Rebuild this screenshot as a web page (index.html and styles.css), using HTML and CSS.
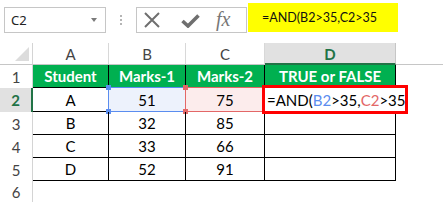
FILE: index.html
```html
<!DOCTYPE html>
<html>
<head>
<meta charset="utf-8">
<link rel="stylesheet" href="styles.css">
</head>
<body>
<div class="app">
  <div class="toolbar">
    <div class="namebox"><span>C2</span><span class="caret"></span></div>
    <div class="dots"><i></i><i></i><i></i></div>
    <div class="fxbox">
      <svg class="ic-x" width="18" height="16" viewBox="0 0 18 16"><path d="M2 1 L16 15 M16 1 L2 15" stroke="#6f6f6f" stroke-width="2" fill="none"/></svg>
      <svg class="ic-check" width="19" height="14" viewBox="0 0 19 14"><path d="M1.5 7 L7 12 L17.5 1.5" stroke="#6f6f6f" stroke-width="3.6" fill="none"/></svg>
      <span class="fx">fx</span>
    </div>
    <div class="formula">=AND(B2&gt;35,C2&gt;35</div>
  </div>
  <div class="sheet">
    <div class="corner"></div>
    <div class="colhdr">A</div>
    <div class="colhdr">B</div>
    <div class="colhdr">C</div>
    <div class="colhdr active">D</div>
    <div class="colhdr last"></div>

    <div class="rowhdr">1</div>
    <div class="cell head">Student</div>
    <div class="cell head">Marks-1</div>
    <div class="cell head">Marks-2</div>
    <div class="cell head">TRUE or FALSE</div>
    <div class="empty"></div>

    <div class="rowhdr active">2</div>
    <div class="cell">A</div>
    <div class="cell ref ref-b">51<span class="refbox blue"><b class="h tl"></b><b class="h tr"></b><b class="h bl"></b><b class="h br"></b></span></div>
    <div class="cell ref ref-c">75<span class="refbox red"><b class="h tl"></b><b class="h bl"></b></span></div>
    <div class="cell edit"><span class="editor">=AND(<span class="rb">B2</span>&gt;35,<span class="rc">C2</span>&gt;35</span></div>
    <div class="empty"></div>

    <div class="rowhdr">3</div>
    <div class="cell">B</div>
    <div class="cell">32</div>
    <div class="cell">85</div>
    <div class="cell"></div>
    <div class="empty"></div>

    <div class="rowhdr">4</div>
    <div class="cell">C</div>
    <div class="cell">33</div>
    <div class="cell">66</div>
    <div class="cell"></div>
    <div class="empty"></div>

    <div class="rowhdr">5</div>
    <div class="cell">D</div>
    <div class="cell">52</div>
    <div class="cell">91</div>
    <div class="cell"></div>
    <div class="empty"></div>

    <div class="rowhdr">6</div>
    <div class="empty"></div>
    <div class="empty"></div>
    <div class="empty"></div>
    <div class="empty"></div>
    <div class="empty"></div>
  </div>
</div>
</body>
</html>
```
FILE: styles.css
```css
* { box-sizing: border-box; }
html, body { margin: 0; padding: 0; background: #fff; }
body { width: 443px; height: 202px; overflow: hidden; font-family: Lato, "Liberation Sans", sans-serif; }

.toolbar {
  display: flex;
  align-items: flex-start;
  height: 43px;
}
.namebox {
  margin: 7px 0 0 4px;
  width: 102px;
  height: 26px;
  border: 1px solid #c6c6c6;
  display: flex;
  align-items: center;
  justify-content: space-between;
  padding: 0 7px 0 6px;
  font-family: "Noto Sans", sans-serif;
  font-size: 13px;
  color: #222;
}
.caret {
  width: 0; height: 0;
  border-left: 3.5px solid transparent;
  border-right: 3.5px solid transparent;
  border-top: 4px solid #7a7a7a;
  margin-right: 1px;
}
.dots {
  width: 30px;
  height: 26px;
  margin-top: 7px;
  display: flex;
  flex-direction: column;
  align-items: center;
  justify-content: center;
  gap: 2px;
}
.dots i { display: block; width: 2px; height: 2px; background: #b5b5b5; }
.fxbox {
  margin-top: 7px;
  width: 111px;
  height: 26px;
  border: 1px solid #c6c6c6;
  display: flex;
  align-items: center;
  padding-left: 6px;
}
.ic-x { margin-right: 20px; }
.ic-check { margin-right: 16px; margin-top: 2px; }
.fx {
  font-family: "Liberation Serif", serif;
  font-style: italic;
  font-size: 20px;
  color: #777;
  line-height: 1;
  margin-top: -2px;
}
.formula {
  margin: 3px 0 0 1px;
  width: 150px;
  height: 29px;
  background: #ffff00;
  padding: 7px 0 0 14px;
  font-size: 12.5px;
  color: #111;
  line-height: 16px;
}

.sheet {
  display: grid;
  grid-template-columns: 33px 76px 77px 79px 131px 1fr;
  grid-template-rows: 22px 23px 24px 23px 23px 23px 21px;
}
.corner {
  border-right: 1px solid #d4d4d4;
  border-bottom: 1px solid #c6c6c6;
  position: relative;
}
.corner::after {
  content: "";
  position: absolute;
  right: 3px; bottom: 3px;
  width: 0; height: 0;
  border-left: 14px solid transparent;
  border-bottom: 14px solid #dcdcdc;
}
.colhdr {
  border-right: 1px solid #d8d8d8;
  border-bottom: 1px solid #c6c6c6;
  display: flex;
  align-items: center;
  justify-content: center;
  font-size: 15px;
  color: #444;
  padding-top: 1px;
}
.colhdr.active {
  background: #e1e1e1;
  color: #217346;
  font-weight: bold;
  border-bottom: 2px solid #217346;
  border-right-color: #c6c6c6;
}
.colhdr.last { border-right: none; }
.rowhdr {
  border-right: 1px solid #d4d4d4;
  display: flex;
  align-items: center;
  justify-content: center;
  font-size: 15px;
  color: #444;
}
.rowhdr.active {
  background: #e1e1e1;
  color: #217346;
  font-weight: bold;
  border-right: 2px solid #217346;
}
.cell {
  border-right: 1px solid #000;
  border-bottom: 1px solid #000;
  display: flex;
  align-items: center;
  justify-content: center;
  font-size: 15px;
  color: #000;
  position: relative;
}
.cell.head {
  background: #00b050;
  color: #fff;
  font-weight: bold;
}
.ref-b { background: #edf2fc; }
.ref-c { background: #fcecec; }
.refbox {
  position: absolute;
  left: -1px; top: -1px; right: -1px; bottom: -1px;
  border: 1px solid;
}
.refbox.blue { border-color: #5b8def; }
.refbox.red { border-color: #e36767; }
.h {
  position: absolute;
  width: 5px; height: 5px;
}
.blue .h { background: #5b8def; }
.red .h { background: #e36767; }
.h.tl { left: -3px; top: -3px; }
.h.tr { right: -3px; top: -3px; }
.h.bl { left: -3px; bottom: -3px; }
.h.br { right: -3px; bottom: -3px; }
.cell.edit { z-index: 2; }
.editor {
  position: absolute;
  left: -3px; top: -3px;
  width: 146px; height: 29px;
  border: 3px solid #ff0000;
  background: #fff;
  padding: 0 0 0 2px;
  display: flex;
  align-items: center;
  font-size: 15px;
  color: #000;
  white-space: nowrap;
}
.rb { color: #5b8def; }
.rc { color: #e36767; }
.empty { }
```
